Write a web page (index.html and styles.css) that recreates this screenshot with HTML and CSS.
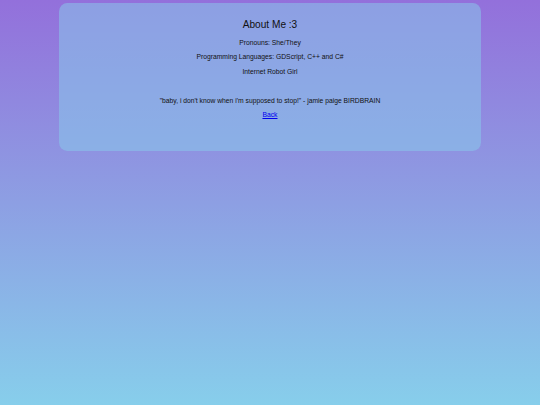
FILE: index.html
```html
<!DOCTYPE html>
<html lang="en">
<head>
<meta charset="utf-8">
<title>About Me :3</title>
<link rel="stylesheet" href="styles.css">
</head>
<body>
  <main class="card">
    <h2 class="title">About Me :3</h2>
    <p>Pronouns: She/They</p>
    <p>Programming Languages: GDScript, C++ and C#</p>
    <p>Internet Robot Girl</p>
    <p class="quote">"baby, i don't know when i'm supposed to stop!" - jamie paige BIRDBRAIN</p>
    <p><a href="#">Back</a></p>
  </main>
</body>
</html>
```
FILE: styles.css
```css
html {
  min-height: 100%;
  background: linear-gradient(to bottom, #9370db, #87ceeb);
}

body {
  margin: 3.4px 0 0;
  font-family: "Liberation Sans", Arial, sans-serif;
  color: #111;
}

.card {
  width: 421.9px;
  margin: 0 auto;
  box-sizing: border-box;
  padding: 7.2px 8.4px 24.8px;
  background: rgba(135, 206, 235, 0.5);
  border-radius: 8.4px;
  text-align: center;
}

.title {
  font-size: 10.125px;
  line-height: 11.6px;
  font-weight: normal;
  margin: 8.4px 0;
}

.card p {
  font-size: 6.75px;
  line-height: 7.76px;
  margin: 6.75px 0;
}

.card .quote {
  margin-top: 21.2px;
}

.card a {
  color: #0000ee;
}
```
